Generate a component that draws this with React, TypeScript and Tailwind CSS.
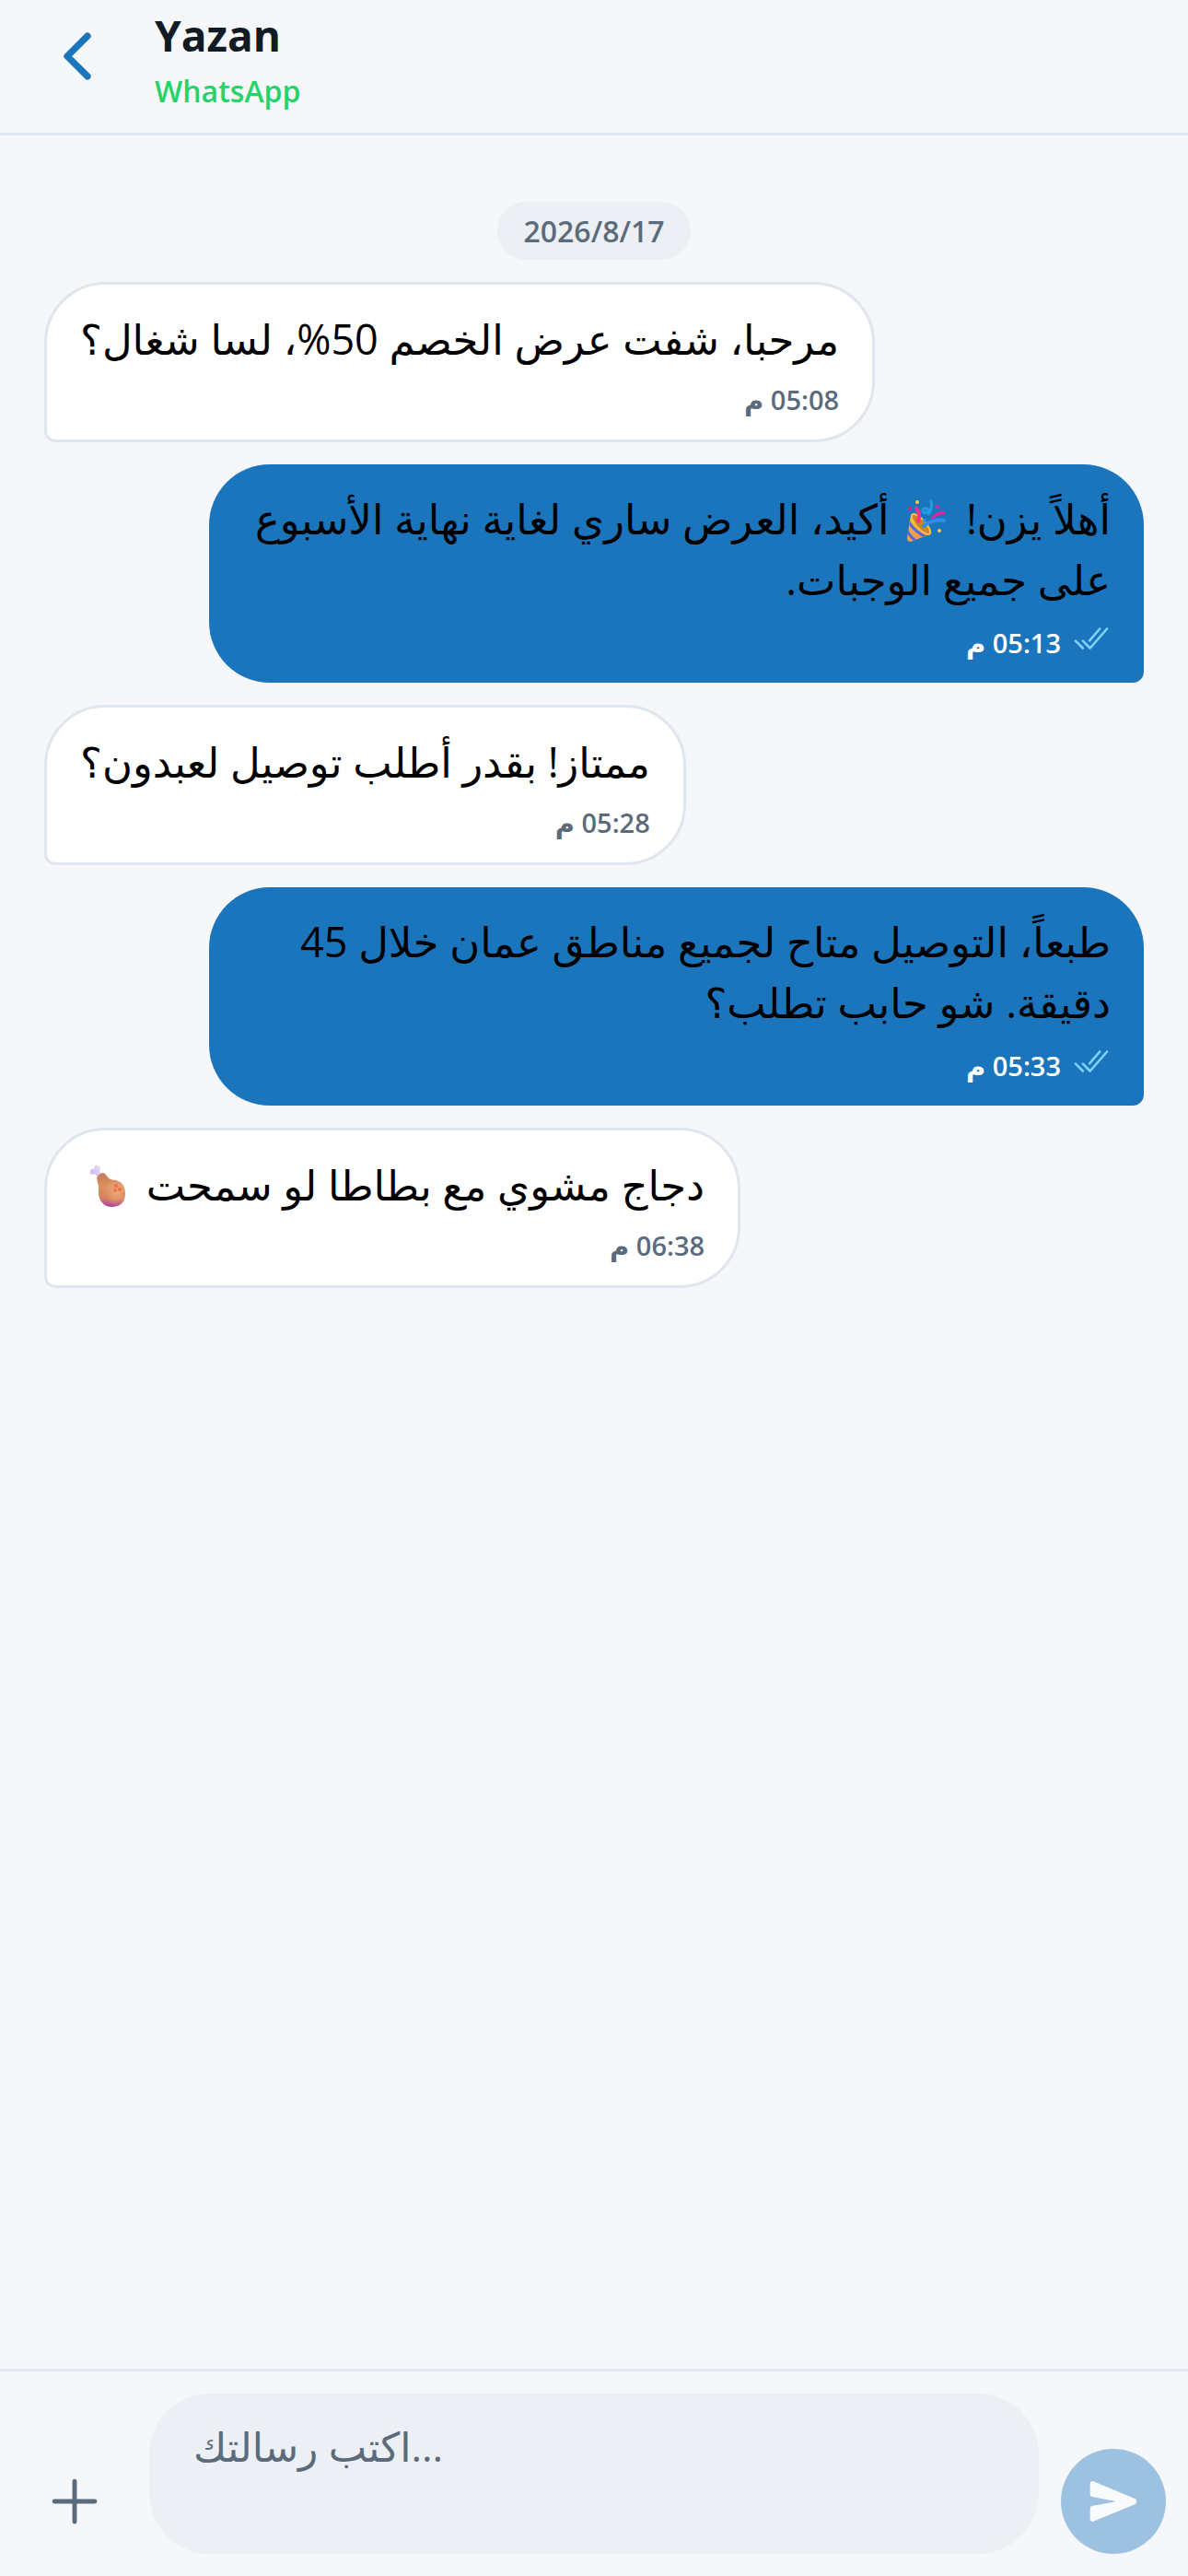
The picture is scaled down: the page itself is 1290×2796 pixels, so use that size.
import React from 'react';
import { IoAdd, IoCheckmarkDone, IoChevronBack, IoSend } from 'react-icons/io5';

interface Message {
  id: number;
  mine: boolean;
  time: string;
  body: React.ReactNode;
}

function PartyPopper() {
  return (
    <svg
      role="img"
      aria-label="🎉"
      viewBox="-4 0 60 56"
      className="inline-block h-14 w-[60px] align-[-12px]"
      fill="none"
      strokeLinecap="round"
    >
      <defs>
        <linearGradient id="cone" x1="0" y1="0" x2="1" y2="1">
          <stop offset="0" stopColor="#fdbb3c" />
          <stop offset="1" stopColor="#f0805a" />
        </linearGradient>
        <clipPath id="coneClip">
          <path d="M8 23 4 48q0 4 4 4l23-9Q20 40 8 23Z" />
        </clipPath>
      </defs>
      <path d="M8 23 4 48q0 4 4 4l23-9Q20 40 8 23Z" fill="url(#cone)" />
      <g clipPath="url(#coneClip)" stroke="#4a69e0" strokeWidth="3">
        <path d="M6 31q6 10 19 16" />
        <path d="M4 40q4 8 12 13" />
      </g>
      <ellipse cx="19" cy="33" rx="5" ry="14" transform="rotate(-42 19 33)" fill="#c8881c" />
      <ellipse
        cx="19"
        cy="33"
        rx="5"
        ry="14"
        transform="rotate(-42 19 33)"
        stroke="#fdbd45"
        strokeWidth="2"
      />
      <path d="M14 16q5 5 2 14" stroke="#f72f91" strokeWidth="4" />
      <path d="M32 26q5-6 12-5" stroke="#ee1f9c" strokeWidth="3" />
      <path d="M22 35q9-8 22-6" stroke="#2f8ded" strokeWidth="4" />
      <path d="M30 8q2 8-3 14M27 17q-5-3-6 1 0 4 4 2 3-2 2-3Z" stroke="#239be0" strokeWidth="3" />
      <circle cx="15" cy="9" r="2" fill="#ffc64a" />
      <circle cx="7" cy="16" r="2" fill="#e61d9d" />
      <circle cx="37" cy="14" r="2" fill="#d827a3" />
      <circle cx="39" cy="40" r="2" fill="#fbc465" />
      <circle cx="23" cy="29" r="2" fill="#2b93ef" />
    </svg>
  );
}

function PoultryLeg() {
  return (
    <svg
      role="img"
      aria-label="🍗"
      viewBox="-4 0 60 56"
      className="inline-block h-14 w-[60px] align-[-12px]"
    >
      <defs>
        <linearGradient id="meat" x1="0" y1="0" x2="0" y2="1">
          <stop offset="0" stopColor="#c07a5c" />
          <stop offset="0.4" stopColor="#dc915f" />
          <stop offset="0.75" stopColor="#d3805f" />
          <stop offset="1" stopColor="#a93aa5" />
        </linearGradient>
        <radialGradient id="shine" cx="0.7" cy="0.55" r="0.45">
          <stop offset="0" stopColor="#f2a873" />
          <stop offset="1" stopColor="#f2a873" stopOpacity="0" />
        </radialGradient>
        <linearGradient id="bone" x1="1" y1="0" x2="0" y2="1">
          <stop offset="0" stopColor="#eeeaf0" />
          <stop offset="1" stopColor="#c9a4ee" />
        </linearGradient>
      </defs>
      <path d="M12 15q-5 2-5-2 0-4 4-3 0-5 4-4 5 1 2 6l4 5-4 4Z" fill="url(#bone)" />
      <path
        d="M14 20q2-5 7-6 2 0 6 6 3 2 8 2 10 3 10 14 0 14-14 15-12 0-15-13V28q-1-3-2-8Z"
        fill="url(#meat)"
      />
      <path
        d="M14 20q2-5 7-6 2 0 6 6 3 2 8 2 10 3 10 14 0 14-14 15-12 0-15-13V28q-1-3-2-8Z"
        fill="url(#shine)"
      />
      <circle cx="35" cy="28" r="2" fill="#e96f4a" />
      <circle cx="39" cy="32" r="2" fill="#e96f4a" />
      <circle cx="34" cy="33" r="2" fill="#e9784f" />
    </svg>
  );
}

const messages: Message[] = [
  { id: 1, mine: false, time: '05:08 م', body: 'مرحبا، شفت عرض الخصم 50%، لسا شغال؟' },
  {
    id: 2,
    mine: true,
    time: '05:13 م',
    body: (
      <>
        أهلاً يزن! <PartyPopper /> أكيد، العرض ساري لغاية نهاية الأسبوع على جميع الوجبات.
      </>
    ),
  },
  { id: 3, mine: false, time: '05:28 م', body: 'ممتاز! بقدر أطلب توصيل لعبدون؟' },
  {
    id: 4,
    mine: true,
    time: '05:33 م',
    body: 'طبعاً، التوصيل متاح لجميع مناطق عمان خلال 45 دقيقة. شو حابب تطلب؟',
  },
  {
    id: 5,
    mine: false,
    time: '06:38 م',
    body: (
      <>
        دجاج مشوي مع بطاطا لو سمحت <PoultryLeg />
      </>
    ),
  },
];

function Bubble({ mine, time, body }: Message) {
  return (
    <li
      dir="rtl"
      className={
        mine
          ? 'max-w-[85%] self-end rounded-[66px] rounded-br-xl bg-[#1b75bc] px-9 pt-[26px] pb-[19px]'
          : 'max-w-[85%] self-start rounded-[66px] rounded-bl-xl border-3 border-[#dfe6ee] bg-white px-9 pt-[26px] pb-[21px]'
      }
    >
      <p className="text-[45px] leading-[66px] text-black">{body}</p>
      <div
        className={
          mine
            ? 'mt-[10px] flex items-center gap-3 text-[29px] leading-[45px] font-semibold text-white'
            : 'mt-[10px] flex items-center text-[29px] leading-[45px] font-semibold text-[#5b6b7b]'
        }
      >
        {mine && <IoCheckmarkDone className="mb-2 size-[42px] text-[#7dd3fc]" />}
        <time>{time}</time>
      </div>
    </li>
  );
}

export default function App() {
  return (
    <div className="flex min-h-screen flex-col bg-[#f5f7fb] font-['Open_Sans','Noto_Sans','DejaVu_Sans',sans-serif]">
      <header className="flex items-center border-b-3 border-[#dfe6ee] pb-[22px] pl-9">
        <button type="button" aria-label="Back" className="mr-9 flex size-24 items-center justify-center">
          <IoChevronBack className="size-[78px] text-[#1b75bc]" />
        </button>
        <div>
          <h1 className="text-[46px] leading-[76px] font-bold text-[#111b24]">Yazan</h1>
          <p className="text-[32px] leading-[46px] font-semibold text-[#25d366]">WhatsApp</p>
        </div>
      </header>

      <main className="flex grow flex-col px-12 pt-18">
        <p className="mb-6 self-center rounded-full bg-[#ecf0f5] px-7 text-[32px] leading-[63px] font-semibold text-[#5b6b7b]">
          2026/8/17
        </p>
        <ul className="flex flex-col gap-6">
          {messages.map((message) => (
            <Bubble key={message.id} {...message} />
          ))}
        </ul>
      </main>

      <form className="flex items-end gap-6 border-t-3 border-[#dfe6ee] p-6">
        <button type="button" aria-label="Add attachment" className="flex size-[114px] items-center justify-center">
          <IoAdd className="size-[78px] text-[#5b6b7b]" />
        </button>
        <textarea
          dir="ltr"
          aria-label="اكتب رسالتك"
          placeholder="اكتب رسالتك..."
          className="h-[174px] min-w-0 grow resize-none rounded-[66px] bg-[#ecf0f5] px-12 py-6 text-[44px] leading-[66px] outline-none placeholder:text-[#5b6b7b]"
        />
        <button
          type="submit"
          aria-label="Send"
          className="flex size-[114px] items-center justify-center rounded-full bg-[#1b75bc] opacity-40"
        >
          <IoSend className="size-[54px] text-white" />
        </button>
      </form>
    </div>
  );
}
